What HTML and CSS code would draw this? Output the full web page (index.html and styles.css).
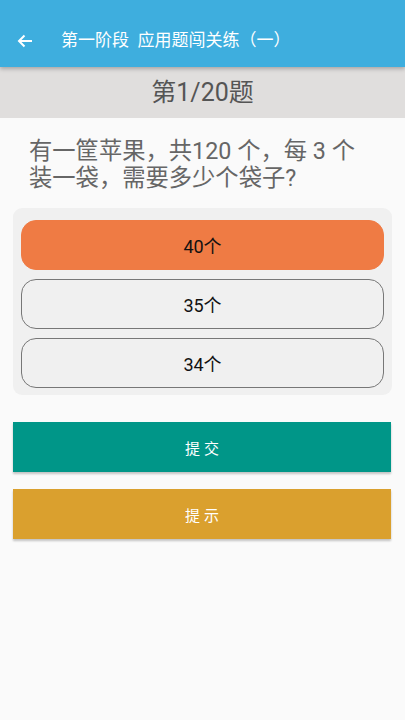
FILE: index.html
```html
<!DOCTYPE html>
<html lang="zh">
<head>
<meta charset="utf-8">
<link rel="stylesheet" href="styles.css">
</head>
<body>
<div class="appbar">
  <svg class="back" width="16" height="14" viewBox="0 0 16 14"><path d="M15 7H2M7.5 1.5L2 7l5.5 5.5" fill="none" stroke="#fff" stroke-width="2"/></svg>
  <span class="title">第一阶段&nbsp;&nbsp;应用题闯关练（一）</span>
</div>
<div class="counter">第1/20题</div>
<div class="question">有一筐苹果，共120 个，每 3 个装一袋，需要多少个袋子?</div>
<div class="options">
  <div class="option selected">40个</div>
  <div class="option">35个</div>
  <div class="option">34个</div>
</div>
<div class="btn submit">提交</div>
<div class="btn hint">提示</div>
</body>
</html>
```
FILE: styles.css
```css
html, body { margin: 0; padding: 0; }
body {
  width: 405px;
  height: 720px;
  background: #fafafa;
  font-family: Roboto, "Noto Sans CJK SC", sans-serif;
  overflow: hidden;
}
.appbar {
  height: 67px;
  background: #3eaede;
  display: flex;
  align-items: flex-end;
  padding: 0 0 15px 17px;
  box-sizing: border-box;
  box-shadow: 0 2px 4px rgba(0,0,0,0.25);
  position: relative;
  z-index: 1;
}
.back { margin-bottom: 4px; }
.title {
  color: #fff;
  font-size: 17px;
  margin-left: 28px;
  line-height: 24px;
}
.counter {
  height: 51px;
  background: #e0dedd;
  color: #555;
  font-size: 25px;
  text-align: center;
  line-height: 52px;
}
.question {
  color: #666;
  font-size: 23.3px;
  line-height: 27px;
  padding: 20px 40px 0 29px;
  height: 70px;
}
.options {
  margin: 0 13px;
  background: #f0f0f0;
  border-radius: 9px;
  padding: 12px 8px 7px;
  display: flex;
  flex-direction: column;
  gap: 9px;
}
.option {
  height: 50px;
  box-sizing: border-box;
  border: 1.5px solid #777;
  border-radius: 15px;
  display: flex;
  align-items: center;
  justify-content: center;
  font-size: 18px;
  color: #111;
}
.option.selected {
  background: #ef7b44;
  border-color: #ef7b44;
}
.btn {
  margin: 0 14px 0 13px;
  height: 50px;
  display: flex;
  align-items: center;
  justify-content: center;
  color: #fff;
  font-size: 15px;
  letter-spacing: 4px;
  text-indent: 4px;
  box-shadow: 0 2px 2px rgba(0,0,0,0.22);
}
.submit { background: #009688; margin-top: 27px; }
.hint { background: #daa02e; margin-top: 17px; }
```
